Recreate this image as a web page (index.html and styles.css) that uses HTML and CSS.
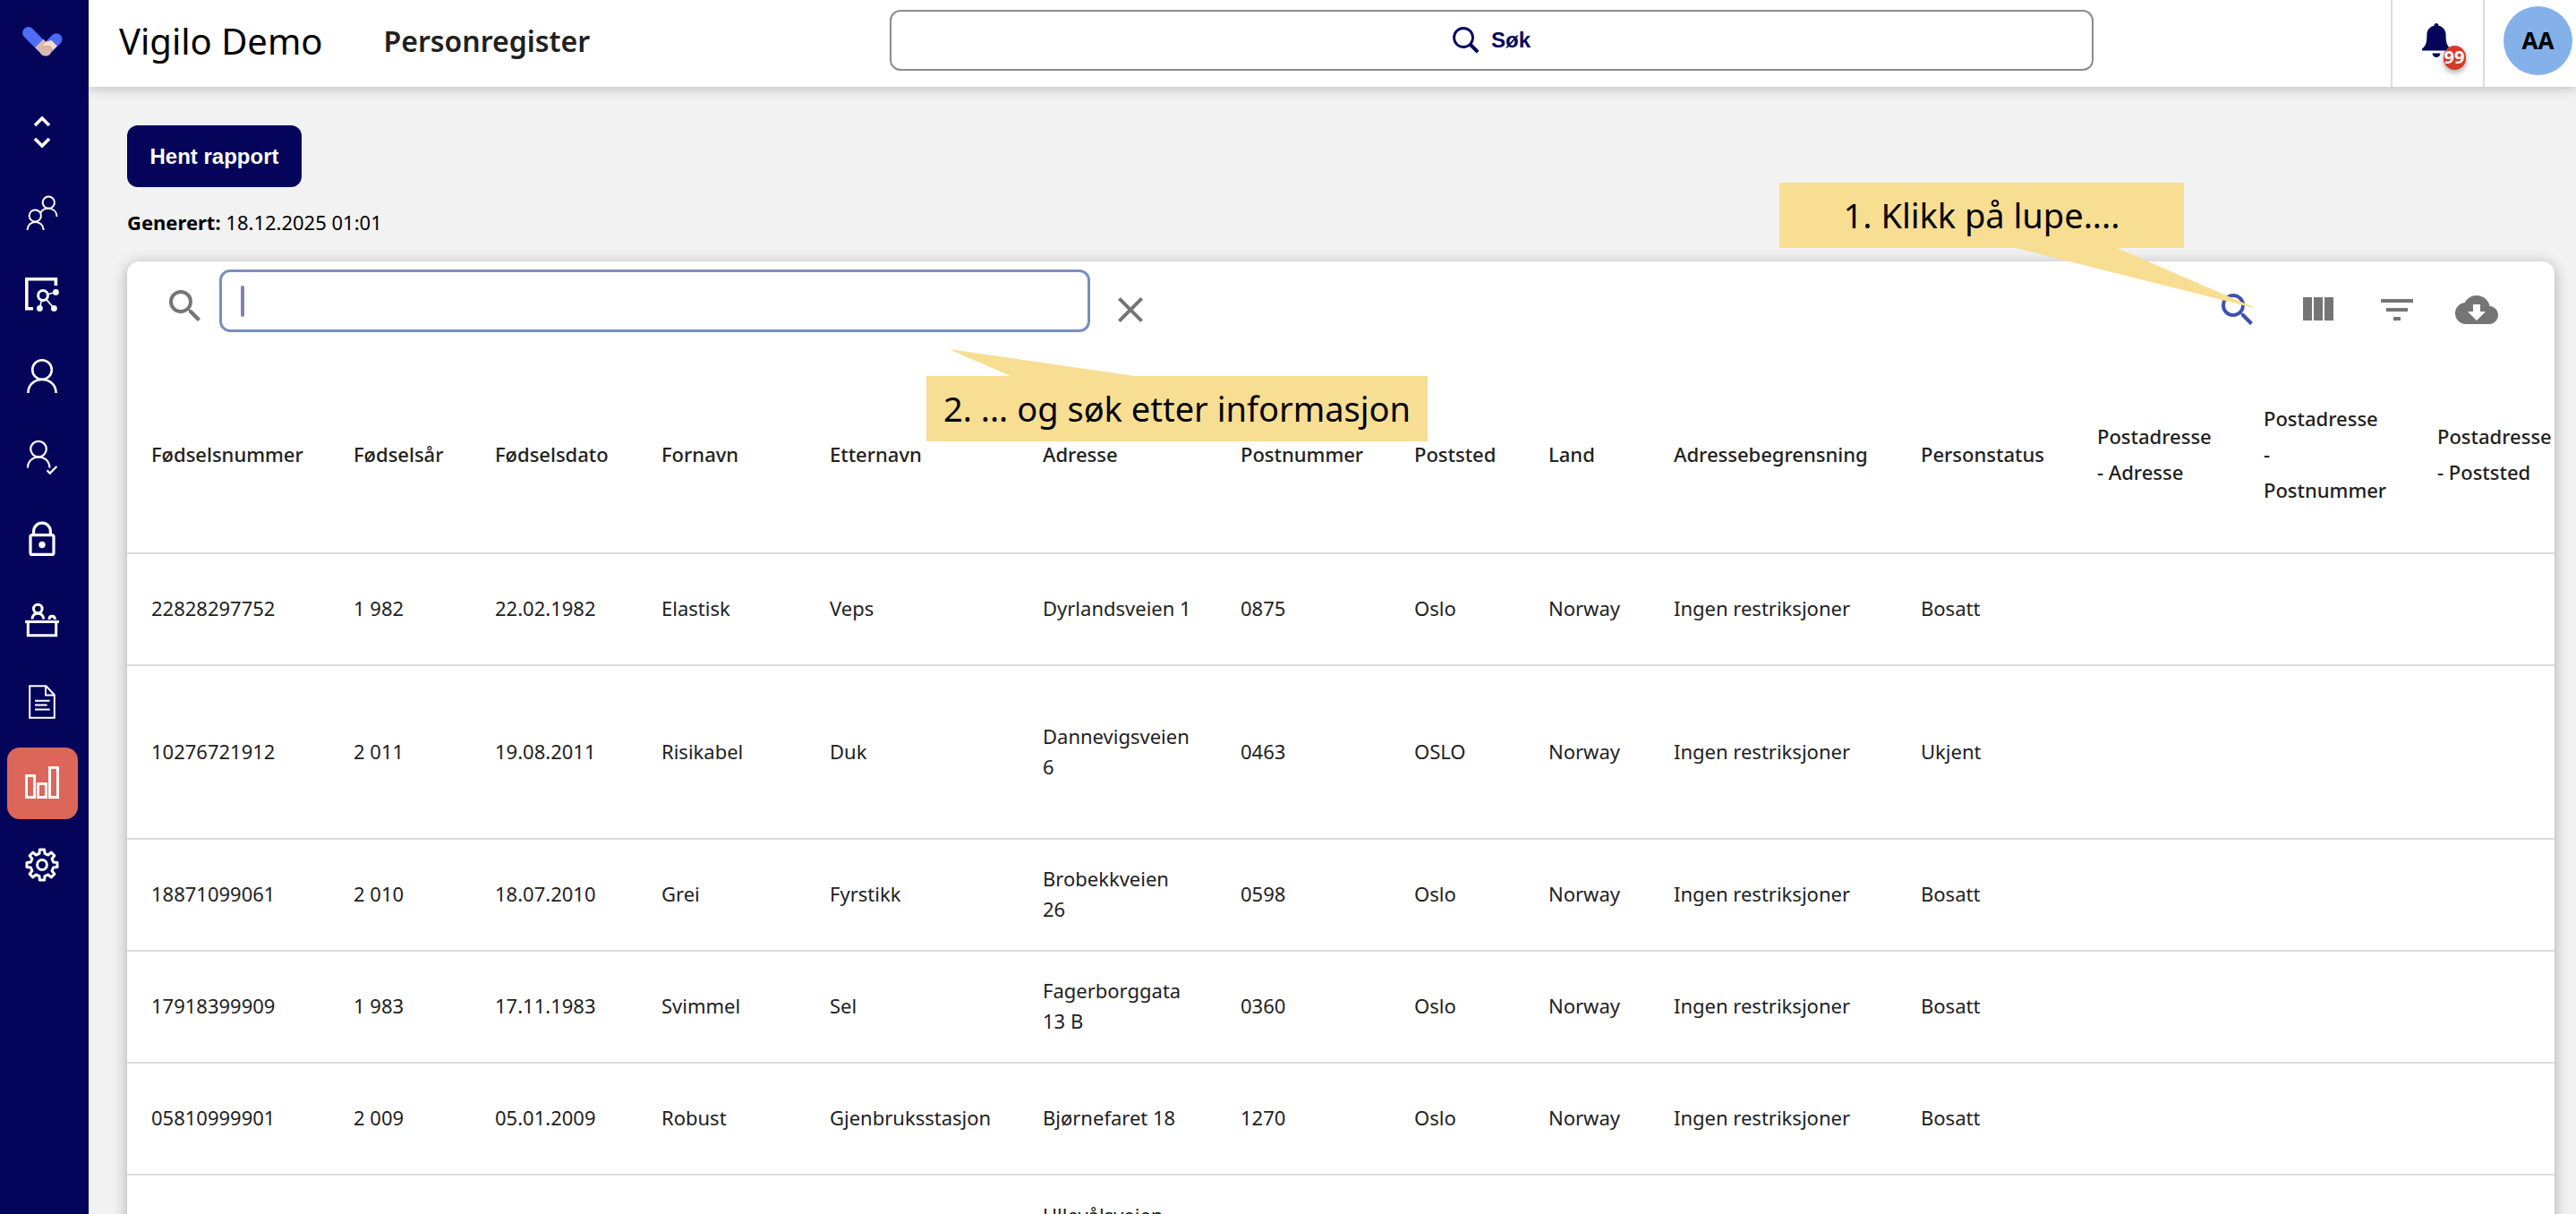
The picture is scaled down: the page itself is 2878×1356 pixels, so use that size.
FILE: index.html
```html
<!DOCTYPE html>
<html lang="no">
<head>
<meta charset="utf-8">
<title>Vigilo Demo – Personregister</title>
<link rel="stylesheet" href="styles.css">
</head>
<body>
<div class="app">
  <aside class="sidebar">
    <a class="logo" href="#" aria-label="Vigilo">
      <svg width="45" height="33" viewBox="0 0 45 33" fill="none" stroke-width="13">
        <path d="M38 13.7 26 25.8" stroke="#4e6cf5" stroke-linecap="round"/>
        <path d="M6.6 6.6 25.8 25.8" stroke="#4e6cf5" stroke-linecap="round"/>
        <path d="M18.8 18.4 26 25.6" stroke="#d9b9ae"/>
        <circle cx="25.9" cy="26" r="6.6" fill="#d9b9ae"/>
        <path d="M26.3 16.8 32.4 15 38.8 21.4 31.6 28.2C33.4 25.4 32.8 22.4 30 21.6H22.4C23.6 19.8 25.2 18.2 26.3 16.8z" fill="#fbdcca"/>
        <path d="M22.4 21.8H30c2.6.6 3.4 3.2 2 6" stroke="#c9a294" stroke-width="1"/>
      </svg>
    </a>
    <nav class="nav" aria-label="Hovedmeny">
      <a class="nav-item" href="#" aria-label="Bytt enhet"><svg class="nav-icon" viewBox="0 0 38 38" stroke-width="3.6"><path d="M11 12 19 4l8 8M11 27l8 8 8-8"/></svg></a>
      <a class="nav-item" href="#" aria-label="Grupper"><svg class="nav-icon" viewBox="0 0 38 38" stroke-width="2"><circle cx="26.3" cy="7.2" r="6.6"/><circle cx="11.3" cy="22" r="6.6"/><path d="M2.6 38c0-12 18-12 18 0M17.5 19c2.5-8 18-7 18 4"/></svg></a>
      <a class="nav-item" href="#" aria-label="Kart"><svg class="nav-icon" viewBox="0 0 38 38" stroke-width="3.6"><path d="M34.4 9V1.8H1.8v33H9"/><circle cx="20" cy="20" r="5.4" stroke-width="3"/><path d="m25 18.8 8-2M18.6 25l-2 8M23.6 24.4l8 9" stroke-width="1.6"/><g class="solid"><circle cx="34.4" cy="16.4" r="3.4"/><circle cx="16.4" cy="34.4" r="3.4"/><circle cx="32.4" cy="34.4" r="3.4"/></g></svg></a>
      <a class="nav-item" href="#" aria-label="Personer"><svg class="nav-icon" viewBox="0 0 38 38" stroke-width="2.6"><circle cx="19" cy="12" r="10.8"/><path d="M3.4 38c0-20 31.2-20 31.2 0"/></svg></a>
      <a class="nav-item" href="#" aria-label="Godkjenning"><svg class="nav-icon" viewBox="0 0 38 38" stroke-width="2.2"><circle cx="15" cy="9.6" r="8.8"/><path d="M3 30.5c0-16 24.4-16 24.4 0M24.6 33.4l3.2 3.2L35.4 29"/></svg></a>
      <a class="nav-item" href="#" aria-label="Sikkerhet"><svg class="nav-icon" viewBox="0 0 38 38" stroke-width="3.2"><rect x="6" y="14.6" width="26" height="21.8" rx="2"/><path d="M9.6 14V10.6a9.4 9.4 0 0 1 18.8 0V14"/><circle class="solid" cx="19" cy="25.5" r="3.7"/></svg></a>
      <a class="nav-item" href="#" aria-label="Skranke"><svg class="nav-icon" viewBox="0 0 38 38" stroke-width="3"><circle cx="14.3" cy="6" r="4.8"/><path d="M8 17.5c0-8.5 12.6-8.5 12.6 0M27 18c0-5 6.4-5 6.4 0M0 20.4h38M3.3 21v14.8h31.4V21"/></svg></a>
      <a class="nav-item" href="#" aria-label="Dokumenter"><svg class="nav-icon" viewBox="0 0 38 38" stroke-width="2"><path d="M5.2 1.2h18.3l9.3 10v25.600H5.2zM23 1.2v10.3h9.8"/><path d="M11 17.8h16.6M11 22.6h13.6M11 27.4h16.6"/></svg></a>
      <a class="nav-item nav-item-active" href="#" aria-label="Rapporter" aria-current="page"><svg class="nav-icon" viewBox="0 0 38 38" stroke-width="3"><path d="M1.5 10.5h9v24h-9zM14.5 19.5h9v15h-9zM27.5 1.5h9v33h-9z"/></svg></a>
      <a class="nav-item" href="#" aria-label="Innstillinger"><svg class="nav-icon" viewBox="-19 -19 38 38" stroke-width="3" stroke-linejoin="round"><path d="M-3-12.6-2.6-17H2.6L3-12.6 6.8-11 10.2-13.9 13.9-10.2 11-6.8 12.6-3 17-2.6V2.6L12.6 3 11 6.8 13.9 10.2 10.2 13.9 6.8 11 3 12.6 2.6 17H-2.6L-3 12.6-6.8 11-10.2 13.9-13.9 10.2-11 6.8-12.6 3-17 2.6V-2.6L-12.6-3-11-6.8-13.9-10.2-10.2-13.9-6.8-11z"/><circle r="5.4"/></svg></a>
    </nav>
  </aside>

  <div class="page">
    <header class="topbar">
      <div class="titles">
        <span class="brand">Vigilo Demo</span>
        <h1 class="page-title">Personregister</h1>
      </div>
      <button class="global-search" type="button">
        <svg width="30" height="30" viewBox="0 0 30 30" fill="none" stroke="#03045a"><circle cx="12" cy="12" r="10.5" stroke-width="2.8"/><path d="m19.5 19.5 8.6 8.6" stroke-width="4"/></svg>
        Søk
      </button>
      <button class="bell" type="button" aria-label="Varsler">
        <span class="bell-wrap">
          <svg width="32" height="38" viewBox="0 0 32 38" fill="#03045a"><path d="M16 0c1.6 0 2.6 1.2 2.6 2.8 5 1.2 8 5 8 10.2 0 8 1 12 5.4 15.5v2H0v-2C4.5 25 5.4 21 5.4 13c0-5.2 3-9 8-10.2C13.4 1.2 14.4 0 16 0zM11.5 33.5h9a4.5 4.5 0 0 1-9 0z"/></svg>
          <span class="badge">99</span>
        </span>
      </button>
      <button class="account" type="button"><span class="avatar">AA</span></button>
    </header>

    <main class="content">
      <button class="primary" type="button">Hent rapport</button>
      <p class="generated"><strong>Generert:</strong> 18.12.2025 01:01</p>

      <section class="card">
        <div class="toolbar">
          <label class="search-label" for="table-search" aria-label="Søk i tabellen"><svg class="tool-icon" viewBox="0 0 24 24"><path d="M15.5 14h-.79l-.28-.27A6.471 6.471 0 0 0 16 9.5 6.5 6.5 0 1 0 9.5 16c1.61 0 3.09-.59 4.23-1.57l.27.28v.79l5 4.99L20.49 19l-4.99-5zm-6 0C7.01 14 5 11.99 5 9.5S7.01 5 9.5 5 14 7.01 14 9.5 11.99 14 9.5 14z"/></svg></label>
          <div class="search-field">
            <input class="search-input" id="table-search" type="text">
            <span class="caret"></span>
          </div>
          <button class="tool close" type="button" aria-label="Lukk søk"><svg class="tool-icon" viewBox="0 0 24 24"><path d="M19 6.41 17.59 5 12 10.59 6.41 5 5 6.41 10.59 12 5 17.59 6.41 19 12 13.41 17.59 19 19 17.59 13.41 12z"/></svg></button>
          <div class="tools">
            <button class="tool tool-on" type="button" aria-label="Søk"><svg class="tool-icon" viewBox="0 0 24 24"><path d="M15.5 14h-.79l-.28-.27A6.471 6.471 0 0 0 16 9.5 6.5 6.5 0 1 0 9.5 16c1.61 0 3.09-.59 4.23-1.57l.27.28v.79l5 4.99L20.49 19l-4.99-5zm-6 0C7.01 14 5 11.99 5 9.5S7.01 5 9.5 5 14 7.01 14 9.5 11.99 14 9.5 14z"/></svg></button>
            <button class="tool" type="button" aria-label="Vis kolonner"><svg class="tool-icon" viewBox="0 0 24 24"><path d="M10 18h5V5h-5v13zm-6 0h5V5H4v13zM16 5v13h5V5h-5z"/></svg></button>
            <button class="tool" type="button" aria-label="Filtrer"><svg class="tool-icon" viewBox="0 0 24 24"><path d="M10 18h4v-2h-4v2zM3 6v2h18V6H3zm3 7h12v-2H6v2z"/></svg></button>
            <button class="tool" type="button" aria-label="Last ned"><svg class="tool-icon" viewBox="0 0 24 24"><path d="M19.35 10.04C18.67 6.59 15.64 4 12 4 9.11 4 6.6 5.64 5.35 8.04 2.34 8.36 0 10.91 0 14c0 3.31 2.69 6 6 6h13c2.76 0 5-2.24 5-5 0-2.64-2.05-4.78-4.65-4.96zM17 13l-5 5-5-5h3V9h4v4h3z"/></svg></button>
          </div>
        </div>

        <table class="people">
          <colgroup>
            <col style="width:226px"><col style="width:158px"><col style="width:186px"><col style="width:188px"><col style="width:238px"><col style="width:221px"><col style="width:194px"><col style="width:150px"><col style="width:140px"><col style="width:276px"><col style="width:197px"><col style="width:186px"><col style="width:194px"><col style="width:200px">
          </colgroup>
          <thead>
            <tr><th>Fødselsnummer</th><th>Fødselsår</th><th>Fødselsdato</th><th>Fornavn</th><th>Etternavn</th><th>Adresse</th><th>Postnummer</th><th>Poststed</th><th>Land</th><th>Adressebegrensning</th><th>Personstatus</th><th>Postadresse<br>- Adresse</th><th>Postadresse<br>-<br>Postnummer</th><th>Postadresse<br>- Poststed</th></tr>
          </thead>
          <tbody>
            <tr><td>22828297752</td><td>1 982</td><td>22.02.1982</td><td>Elastisk</td><td>Veps</td><td>Dyrlandsveien 1</td><td>0875</td><td>Oslo</td><td>Norway</td><td>Ingen restriksjoner</td><td>Bosatt</td><td></td><td></td><td></td></tr>
            <tr class="tall"><td>10276721912</td><td>2 011</td><td>19.08.2011</td><td>Risikabel</td><td>Duk</td><td>Dannevigsveien<br>6</td><td>0463</td><td>OSLO</td><td>Norway</td><td>Ingen restriksjoner</td><td>Ukjent</td><td></td><td></td><td></td></tr>
            <tr><td>18871099061</td><td>2 010</td><td>18.07.2010</td><td>Grei</td><td>Fyrstikk</td><td>Brobekkveien<br>26</td><td>0598</td><td>Oslo</td><td>Norway</td><td>Ingen restriksjoner</td><td>Bosatt</td><td></td><td></td><td></td></tr>
            <tr><td>17918399909</td><td>1 983</td><td>17.11.1983</td><td>Svimmel</td><td>Sel</td><td>Fagerborggata<br>13 B</td><td>0360</td><td>Oslo</td><td>Norway</td><td>Ingen restriksjoner</td><td>Bosatt</td><td></td><td></td><td></td></tr>
            <tr><td>05810999901</td><td>2 009</td><td>05.01.2009</td><td>Robust</td><td>Gjenbruksstasjon</td><td>Bjørnefaret 18</td><td>1270</td><td>Oslo</td><td>Norway</td><td>Ingen restriksjoner</td><td>Bosatt</td><td></td><td></td><td></td></tr>
            <tr class="top"><td></td><td></td><td></td><td></td><td></td><td>Ullevålsveien</td><td></td><td></td><td></td><td></td><td></td><td></td><td></td><td></td></tr>
          </tbody>
        </table>
      </section>
    </main>
  </div>

  <div class="callout callout-open">1. Klikk på lupe....
    <svg class="tail" width="270" height="69" viewBox="0 0 270 69"><path d="M0 0 113 0 270 68z"/></svg>
  </div>
  <div class="callout callout-search">2. ... og søk etter informasjon
    <svg class="tail" width="208" height="30" viewBox="0 0 208 30"><path d="M0 0 208 30H69z"/></svg>
  </div>
</div>
</body>
</html>
```
FILE: styles.css
```css
* { box-sizing: border-box; }

body {
  margin: 0;
  background: #f2f2f2;
  color: #000;
  font-family: "Noto Sans", sans-serif;
  font-size: 22px;
  line-height: 34px;
}

button {
  margin: 0;
  padding: 0;
  border: 0;
  background: none;
  font: inherit;
  color: inherit;
  cursor: pointer;
}

svg { display: block; }

.app {
  position: relative;
  display: flex;
  height: 100vh;
  overflow: hidden;
}

/* Sidebar */
.sidebar {
  flex: none;
  width: 99px;
  padding: 30px 12px 0 8px;
  background: #03045a;
}
.logo {
  display: flex;
  justify-content: center;
  height: 77px;
}
.nav {
  display: flex;
  flex-direction: column;
  gap: 11px;
}
.nav-item {
  display: flex;
  align-items: center;
  justify-content: center;
  height: 80px;
  padding-right: 1px;
  border-radius: 14px;
}
.nav-item-active { background: #dc6758; }
.nav-icon {
  width: 38px;
  height: 38px;
  fill: none;
  stroke: #fff;
  overflow: visible;
}
.solid { fill: #fff; stroke: none; }

/* Top bar */
.page {
  flex: 1;
  min-width: 0;
}
.topbar {
  position: relative;
  display: grid;
  grid-template-columns: 895px 1fr 103px 104px;
  height: 97px;
  background: #fff;
  box-shadow: 0 2px 12px rgba(0, 0, 0, .22);
}
.titles {
  display: flex;
  align-items: center;
  gap: 68px;
  padding: 0 0 6px 34px;
}
.brand { font-size: 40px; }
.page-title {
  margin: 0;
  font-size: 32px;
  font-weight: 600;
  color: #212121;
}
.global-search {
  display: flex;
  align-items: center;
  justify-content: center;
  gap: 13px;
  height: 68px;
  margin: 11px 332px 0 0;
  border: 2px solid #8c8c8c;
  border-radius: 12px;
  color: #03045a;
  font-family: "Liberation Sans", sans-serif;
  font-size: 24px;
  font-weight: 700;
}
.bell, .account {
  display: flex;
  justify-content: center;
  border-left: 2px solid #ddd;
}
.bell { padding-top: 26px; }
.bell-wrap {
  position: relative;
  margin-right: 4px;
}
.badge {
  position: absolute;
  left: 24px;
  top: 25px;
  width: 25px;
  height: 27px;
  border-radius: 13px;
  background: #d43b28;
  box-shadow: 0 3px 6px rgba(0, 0, 0, .35);
  color: #fff;
  font-size: 20px;
  font-weight: 700;
  line-height: 26px;
  text-align: center;
}
.account {
  justify-content: flex-end;
  padding: 7px 4px 0 0;
}
.avatar {
  width: 77px;
  height: 77px;
  border-radius: 50%;
  background: #84b1ea;
  font-size: 26px;
  font-weight: 700;
  line-height: 77px;
  text-align: center;
}

/* Report */
.content { padding: 43px 24px 0 43px; }
.primary {
  display: block;
  width: 195px;
  height: 69px;
  border-radius: 12px;
  background: #03045a;
  color: #fff;
  font-family: "Liberation Sans", sans-serif;
  font-size: 24px;
  font-weight: 700;
}
.generated {
  margin: 22px 0 27px;
}
.card {
  overflow: hidden;
  border-radius: 14px;
  background: #fff;
  box-shadow: 0 3px 16px rgba(0, 0, 0, .3);
}
.toolbar {
  display: flex;
  align-items: flex-start;
  height: 107px;
  padding: 9px 63px 0 41px;
}
.tool-icon {
  width: 48px;
  height: 48px;
  fill: #757575;
}
.search-label { padding: 17px 14px 0 0; }
.search-field {
  position: relative;
  width: 973px;
}
.search-input {
  display: block;
  width: 100%;
  height: 70px;
  padding: 0 22px;
  border: 3px solid #7a8fc0;
  border-radius: 12px;
  outline: 0;
  background: #fff;
  font: inherit;
}
.caret {
  position: absolute;
  left: 24px;
  top: 18px;
  width: 4px;
  height: 35px;
  border-radius: 2px;
  background: #8482b5;
}
.close { margin: 21px 0 0 21px; }
.tools {
  display: flex;
  gap: 41px;
  margin: 21px 0 0 auto;
}
.tool-on .tool-icon { fill: #3f51b5; }

.people {
  width: 2754px;
  table-layout: fixed;
  border-collapse: separate;
  border-spacing: 0;
  color: #212121;
}
.people th, .people td {
  padding: 0 0 3px 27px;
  border-bottom: 2px solid #dedede;
  text-align: left;
  white-space: nowrap;
}
.people th {
  height: 220px;
  font-weight: 500;
  line-height: 40px;
}
.people td { height: 125px; }
.people .tall td { height: 194px; }
.people .top td {
  padding-top: 27px;
  vertical-align: top;
}

/* Guide notes laid over the page */
.callout {
  position: absolute;
  height: 73px;
  background: #f8de93;
  font-size: 38px;
  line-height: 72px;
  text-align: center;
  white-space: nowrap;
}
.callout-open {
  right: 438px;
  top: 204px;
  width: 452px;
}
.callout-search {
  left: 1035px;
  top: 420px;
  width: 560px;
}
.tail {
  position: absolute;
  fill: #f8de93;
}
.callout-open .tail {
  left: 264px;
  top: 100%;
}
.callout-search .tail {
  left: 25px;
  bottom: 100%;
}
```
